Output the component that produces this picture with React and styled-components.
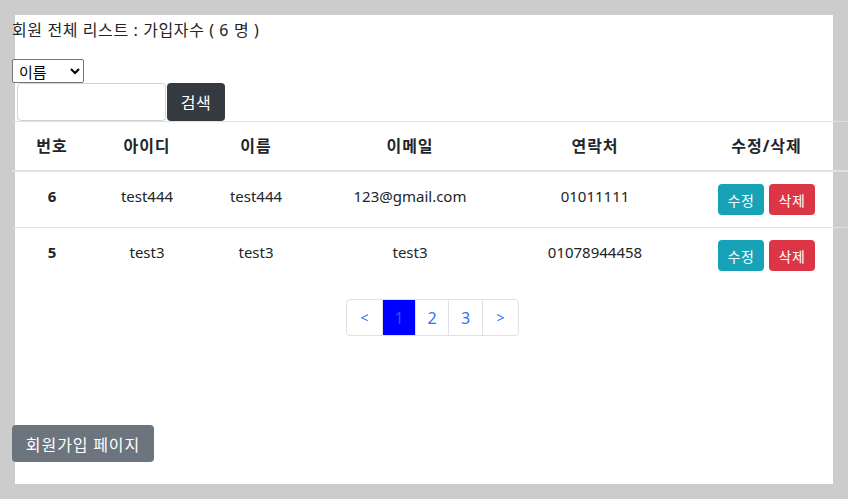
import React from 'react'
import styled, { createGlobalStyle } from 'styled-components'

const GlobalStyle = createGlobalStyle`
    html, body {
        margin: 0;
        padding: 0;
        background: #cccccc;
        overflow: hidden;
    }
    body {
        font-family: "Noto Sans", "Noto Sans CJK KR", sans-serif;
        color: #212529;
    }
`

const Painel = styled.div`
    margin: 15px;
    width: 818px;
    height: 469px;
    background: #ffffff;
`

const Conteudo = styled.div`
    margin-left: -3px;
    width: 841px;
    display: flex;
    flex-direction: column;
`

const Titulo = styled.div`
    padding-top: 3px;
    font-size: 16px;
    letter-spacing: 0.6px;
    line-height: 24px;
`

const Seletor = styled.select`
    margin-top: 17px;
    width: 72px;
    height: 24px;
    font-family: "Noto Sans CJK KR", sans-serif;
    font-size: 15px;
    color: #000;
    border: 1px solid #767676;
    border-radius: 2px;
    background: #fff;
    padding: 0 2px;
`

const CampoBuscar = styled.div`
    display: flex;
    margin-left: 5px;
    height: 38px;
`

const InputBuscar = styled.input`
    width: 149px;
    height: 38px;
    box-sizing: border-box;
    border: 1px solid #ced4da;
    border-radius: 4px;
    padding: 6px 12px;
    font-size: 16px;
`

const BotaoBuscar = styled.button`
    margin-left: 1px;
    width: 58px;
    height: 38px;
    border: none;
    border-radius: 4px;
    background: #343a40;
    color: #fff;
    font-family: "Noto Sans CJK KR", sans-serif;
    font-size: 16px;
    letter-spacing: 0.5px;
`

const Tabela = styled.table`
    width: 100%;
    border-collapse: collapse;
    table-layout: fixed;
`

const Th = styled.th`
    padding: 12px;
    font-size: 16px;
    letter-spacing: 1px;
    line-height: 24px;
    font-weight: 700;
    text-align: center;
    border-top: 1px solid #dee2e6;
    border-bottom: 2px solid #dee2e6;
`

const Td = styled.td`
    padding: 12px;
    height: 31px;
    font-size: 15px;
    line-height: 24px;
    text-align: center;
    vertical-align: top;
    border-top: 1px solid #dee2e6;
    font-weight: ${p => (p.bold ? 700 : 400)};
`

const Acoes = styled.div`
    display: flex;
    justify-content: center;
    gap: 5px;
`

const BotaoPequeno = styled.button`
    width: 46px;
    height: 31px;
    border: none;
    border-radius: 4px;
    background: ${p => p.cor};
    color: #fff;
    font-family: "Noto Sans CJK KR", sans-serif;
    font-size: 14px;
    letter-spacing: 0.5px;
    padding: 0;
`

const Paginacao = styled.ul`
    list-style: none;
    display: flex;
    justify-content: center;
    margin: 16px 0 0;
    padding: 0;
`

const Pagina = styled.li`
    width: ${p => p.w}px;
    height: 37px;
    box-sizing: border-box;
    display: flex;
    align-items: center;
    justify-content: center;
    border: 1px solid #dee2e6;
    margin-left: -1px;
    background: ${p => (p.ativo ? '#0000ff' : '#fff')};
    color: ${p => (p.ativo ? '#1f5ff0' : '#2f74f5')};
    font-size: ${p => (p.seta ? '14px' : '16px')};
    &:first-child {
        margin-left: 0;
        border-radius: 4px 0 0 4px;
    }
    &:last-child {
        border-radius: 0 4px 4px 0;
    }
`

const BotaoCadastro = styled.button`
    align-self: flex-start;
    margin-top: 89px;
    width: 142px;
    height: 37px;
    border: none;
    border-radius: 4px;
    background: #6c757d;
    color: #fff;
    font-family: "Noto Sans CJK KR", sans-serif;
    font-size: 16px;
    letter-spacing: 1px;
    padding: 0;
`

const usuarios = [
    { id: 6, userId: 'test444', nome: 'test444', email: '123@gmail.com', fone: '01011111' },
    { id: 5, userId: 'test3', nome: 'test3', email: 'test3', fone: '01078944458' },
]

const colunas = [
    { titulo: '번호', w: 80 },
    { titulo: '아이디', w: 110 },
    { titulo: '이름', w: 108 },
    { titulo: '이메일', w: 200 },
    { titulo: '연락처', w: 170 },
    { titulo: '수정/삭제' },
]

const paginas = [
    { txt: '<', w: 37, seta: true },
    { txt: '1', w: 34, ativo: true },
    { txt: '2', w: 34 },
    { txt: '3', w: 35 },
    { txt: '>', w: 37, seta: true },
]

export default function App() {
    return (
        <>
            <GlobalStyle />
            <Painel>
                <Conteudo>
                    <Titulo>회원 전체 리스트 : 가입자수 ( 6 명 )</Titulo>
                    <div>
                        <Seletor defaultValue="name">
                            <option value="name">이름</option>
                            <option value="id">아이디</option>
                        </Seletor>
                    </div>
                    <CampoBuscar>
                        <InputBuscar type="text" />
                        <BotaoBuscar>검색</BotaoBuscar>
                    </CampoBuscar>
                    <Tabela>
                        <colgroup>
                            {colunas.map(c => (
                                <col key={c.titulo} style={c.w ? { width: c.w } : undefined} />
                            ))}
                        </colgroup>
                        <thead>
                            <tr>
                                {colunas.map(c => (
                                    <Th key={c.titulo}>{c.titulo}</Th>
                                ))}
                            </tr>
                        </thead>
                        <tbody>
                            {usuarios.map(u => (
                                <tr key={u.id}>
                                    <Td bold>{u.id}</Td>
                                    <Td>{u.userId}</Td>
                                    <Td>{u.nome}</Td>
                                    <Td>{u.email}</Td>
                                    <Td>{u.fone}</Td>
                                    <Td>
                                        <Acoes>
                                            <BotaoPequeno cor="#17a2b8">수정</BotaoPequeno>
                                            <BotaoPequeno cor="#dc3545">삭제</BotaoPequeno>
                                        </Acoes>
                                    </Td>
                                </tr>
                            ))}
                        </tbody>
                    </Tabela>
                    <Paginacao>
                        {paginas.map(p => (
                            <Pagina key={p.txt} w={p.w} ativo={p.ativo} seta={p.seta}>
                                {p.txt}
                            </Pagina>
                        ))}
                    </Paginacao>
                    <BotaoCadastro>회원가입 페이지</BotaoCadastro>
                </Conteudo>
            </Painel>
        </>
    )
}
